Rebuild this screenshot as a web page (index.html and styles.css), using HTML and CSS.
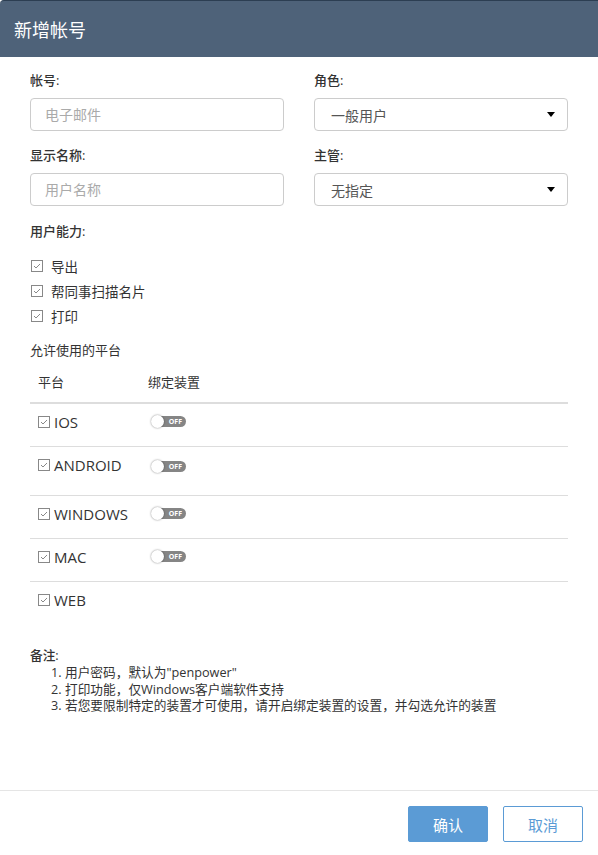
FILE: index.html
```html
<!DOCTYPE html>
<html lang="zh-CN">
<head>
    <meta charset="UTF-8">
    <meta name="viewport" content="width=device-width, initial-scale=1.0">
    <title>新增帐号</title>
    <link rel="stylesheet" href="styles.css">
</head>
<body>
    <div class="dialog">
        <div class="dialog-header">
            <h2>新增帐号</h2>
        </div>

        <div class="dialog-body">
            <div class="form-row">
                <div class="form-group">
                    <label>帐号:</label>
                    <input type="text" class="form-control" placeholder="电子邮件">
                </div>
                <div class="form-group">
                    <label>角色:</label>
                    <div class="select">一般用户<span class="caret"></span></div>
                </div>
            </div>
            <div class="form-row">
                <div class="form-group">
                    <label>显示名称:</label>
                    <input type="text" class="form-control" placeholder="用户名称">
                </div>
                <div class="form-group">
                    <label>主管:</label>
                    <div class="select">无指定<span class="caret"></span></div>
                </div>
            </div>

            <div class="section-title">用户能力:</div>
            <ul class="abilities">
                <li><svg class="check" viewBox="0 0 12 12"><rect x="0.5" y="0.5" width="11" height="11"/><polyline points="3,6 5,8 9,4"/></svg>导出</li>
                <li><svg class="check" viewBox="0 0 12 12"><rect x="0.5" y="0.5" width="11" height="11"/><polyline points="3,6 5,8 9,4"/></svg>帮同事扫描名片</li>
                <li><svg class="check" viewBox="0 0 12 12"><rect x="0.5" y="0.5" width="11" height="11"/><polyline points="3,6 5,8 9,4"/></svg>打印</li>
            </ul>

            <div class="section-title platforms-title">允许使用的平台</div>
            <table class="platforms">
                <thead>
                    <tr><th class="col-platform">平台</th><th>绑定装置</th></tr>
                </thead>
                <tbody>
                    <tr>
                        <td><span class="platform"><svg class="check" viewBox="0 0 12 12"><rect x="0.5" y="0.5" width="11" height="11"/><polyline points="3,6 5,8 9,4"/></svg>IOS</span></td>
                        <td><span class="toggle"><span class="knob"></span>OFF</span></td>
                    </tr>
                    <tr class="tall">
                        <td><span class="platform"><svg class="check" viewBox="0 0 12 12"><rect x="0.5" y="0.5" width="11" height="11"/><polyline points="3,6 5,8 9,4"/></svg>ANDROID</span></td>
                        <td><span class="toggle low"><span class="knob"></span>OFF</span></td>
                    </tr>
                    <tr>
                        <td><span class="platform"><svg class="check" viewBox="0 0 12 12"><rect x="0.5" y="0.5" width="11" height="11"/><polyline points="3,6 5,8 9,4"/></svg>WINDOWS</span></td>
                        <td><span class="toggle"><span class="knob"></span>OFF</span></td>
                    </tr>
                    <tr>
                        <td><span class="platform"><svg class="check" viewBox="0 0 12 12"><rect x="0.5" y="0.5" width="11" height="11"/><polyline points="3,6 5,8 9,4"/></svg>MAC</span></td>
                        <td><span class="toggle"><span class="knob"></span>OFF</span></td>
                    </tr>
                    <tr>
                        <td><span class="platform"><svg class="check" viewBox="0 0 12 12"><rect x="0.5" y="0.5" width="11" height="11"/><polyline points="3,6 5,8 9,4"/></svg>WEB</span></td>
                        <td></td>
                    </tr>
                </tbody>
            </table>

            <div class="notes">
                <div class="notes-title">备注:</div>
                <ol>
                    <li>用户密码，默认为"penpower"</li>
                    <li>打印功能，仅Windows客户端软件支持</li>
                    <li>若您要限制特定的装置才可使用，请开启绑定装置的设置，并勾选允许的装置</li>
                </ol>
            </div>
        </div>

        <div class="dialog-footer">
            <button class="btn btn-primary">确认</button>
            <button class="btn btn-default">取消</button>
        </div>
    </div>
</body>
</html>
```

FILE: styles.css
```css
html, body {
    margin: 0;
    padding: 0;
    background: #fff;
}
body {
    font-family: "Open Sans", "Noto Sans CJK SC", sans-serif;
    color: #333;
    font-size: 13px;
}
.dialog {
    display: flex;
    flex-direction: column;
    min-height: 855px;
}
.dialog-header {
    height: 56px;
    background-color: #4e6279;
    border-top: 1px solid #2c3e52;
    border-top-left-radius: 4px;
    display: flex;
    align-items: center;
    padding: 0 14px;
}
.dialog-header h2 {
    margin: 0;
    font-size: 18px;
    font-weight: normal;
    color: #fff;
}
.dialog-body {
    flex: 1;
    padding: 13px 30px 0;
}
.form-row {
    display: flex;
    gap: 30px;
}
.form-group {
    flex: 1;
    margin-bottom: 14px;
}
.form-group label {
    display: block;
    line-height: 20px;
    font-weight: 500;
    margin-bottom: 8px;
}
.form-control, .select {
    box-sizing: border-box;
    width: 100%;
    height: 33px;
    border: 1px solid #ccc;
    border-radius: 4px;
    font-family: inherit;
    font-size: 14px;
    color: #555;
    outline: none;
}
.form-control {
    padding: 0 14px;
}
.form-control::placeholder {
    color: #aaa;
}
.select {
    display: flex;
    align-items: center;
    justify-content: space-between;
    padding: 0 12px 0 16px;
}
.caret {
    width: 0;
    height: 0;
    border-left: 4px solid transparent;
    border-right: 4px solid transparent;
    border-top: 5px solid #000;
}
.section-title {
    line-height: 20px;
    font-weight: 500;
    margin-top: 1px;
}
.abilities {
    list-style: none;
    margin: 12px 0 0;
    padding: 0 0 0 1px;
}
.abilities li {
    display: flex;
    align-items: center;
    height: 25px;
    font-size: 13.5px;
}
.check {
    width: 12px;
    height: 12px;
    flex: none;
    fill: none;
    stroke: #888;
    stroke-width: 1;
}
.abilities .check {
    margin-right: 8px;
}
.platforms-title {
    margin-top: 12px;
    font-weight: normal;
}
.platforms {
    width: 100%;
    border-collapse: collapse;
    margin-top: 2px;
}
.platforms th {
    text-align: left;
    font-weight: normal;
    font-size: 13px;
    line-height: 20px;
    padding: 10px 8px;
    border-bottom: 2px solid #ddd;
}
.platforms .col-platform {
    width: 94px;
}
.platforms td {
    padding: 8px 8px 14px;
    height: 20px;
    line-height: 20px;
    font-size: 15px;
    border-bottom: 1px solid #ddd;
    vertical-align: top;
}
.platforms tr:last-child td {
    border-bottom: none;
}
.platforms tr.tall td {
    padding-bottom: 20px;
}
.platform {
    display: flex;
    align-items: center;
    height: 20px;
}
.platform .check {
    margin-right: 4px;
}
.toggle {
    position: relative;
    display: inline-block;
    box-sizing: border-box;
    width: 34px;
    height: 11px;
    margin: 4px 0 0 4px;
    padding-right: 4px;
    border-radius: 6px;
    background: #858585;
    color: #fff;
    font-size: 7px;
    font-weight: bold;
    line-height: 11px;
    text-align: right;
    vertical-align: top;
}
.toggle.low {
    margin-top: 6px;
}
.knob {
    position: absolute;
    left: -1px;
    top: -1px;
    width: 13px;
    height: 13px;
    border-radius: 50%;
    background: #fff;
    box-shadow: 0 0 2px rgba(0,0,0,0.5);
}
.notes {
    margin-top: 22px;
    font-size: 12.7px;
}
.notes-title {
    line-height: 18px;
    font-weight: 500;
}
.notes ol {
    margin: 0;
    padding-left: 35px;
}
.notes li {
    line-height: 16.5px;
}
.dialog-footer {
    border-top: 1px solid #e5e5e5;
    padding: 15px 15px 13px;
    display: flex;
    justify-content: flex-end;
    gap: 15px;
}
.btn {
    width: 80px;
    height: 36px;
    border-radius: 2px;
    font-family: inherit;
    font-size: 15px;
    cursor: pointer;
}
.btn-primary {
    background: #5b9bd5;
    border: 1px solid #5b9bd5;
    color: #fff;
}
.btn-default {
    background: #fff;
    border: 1px solid #5b9bd5;
    color: #5b9bd5;
}
```
